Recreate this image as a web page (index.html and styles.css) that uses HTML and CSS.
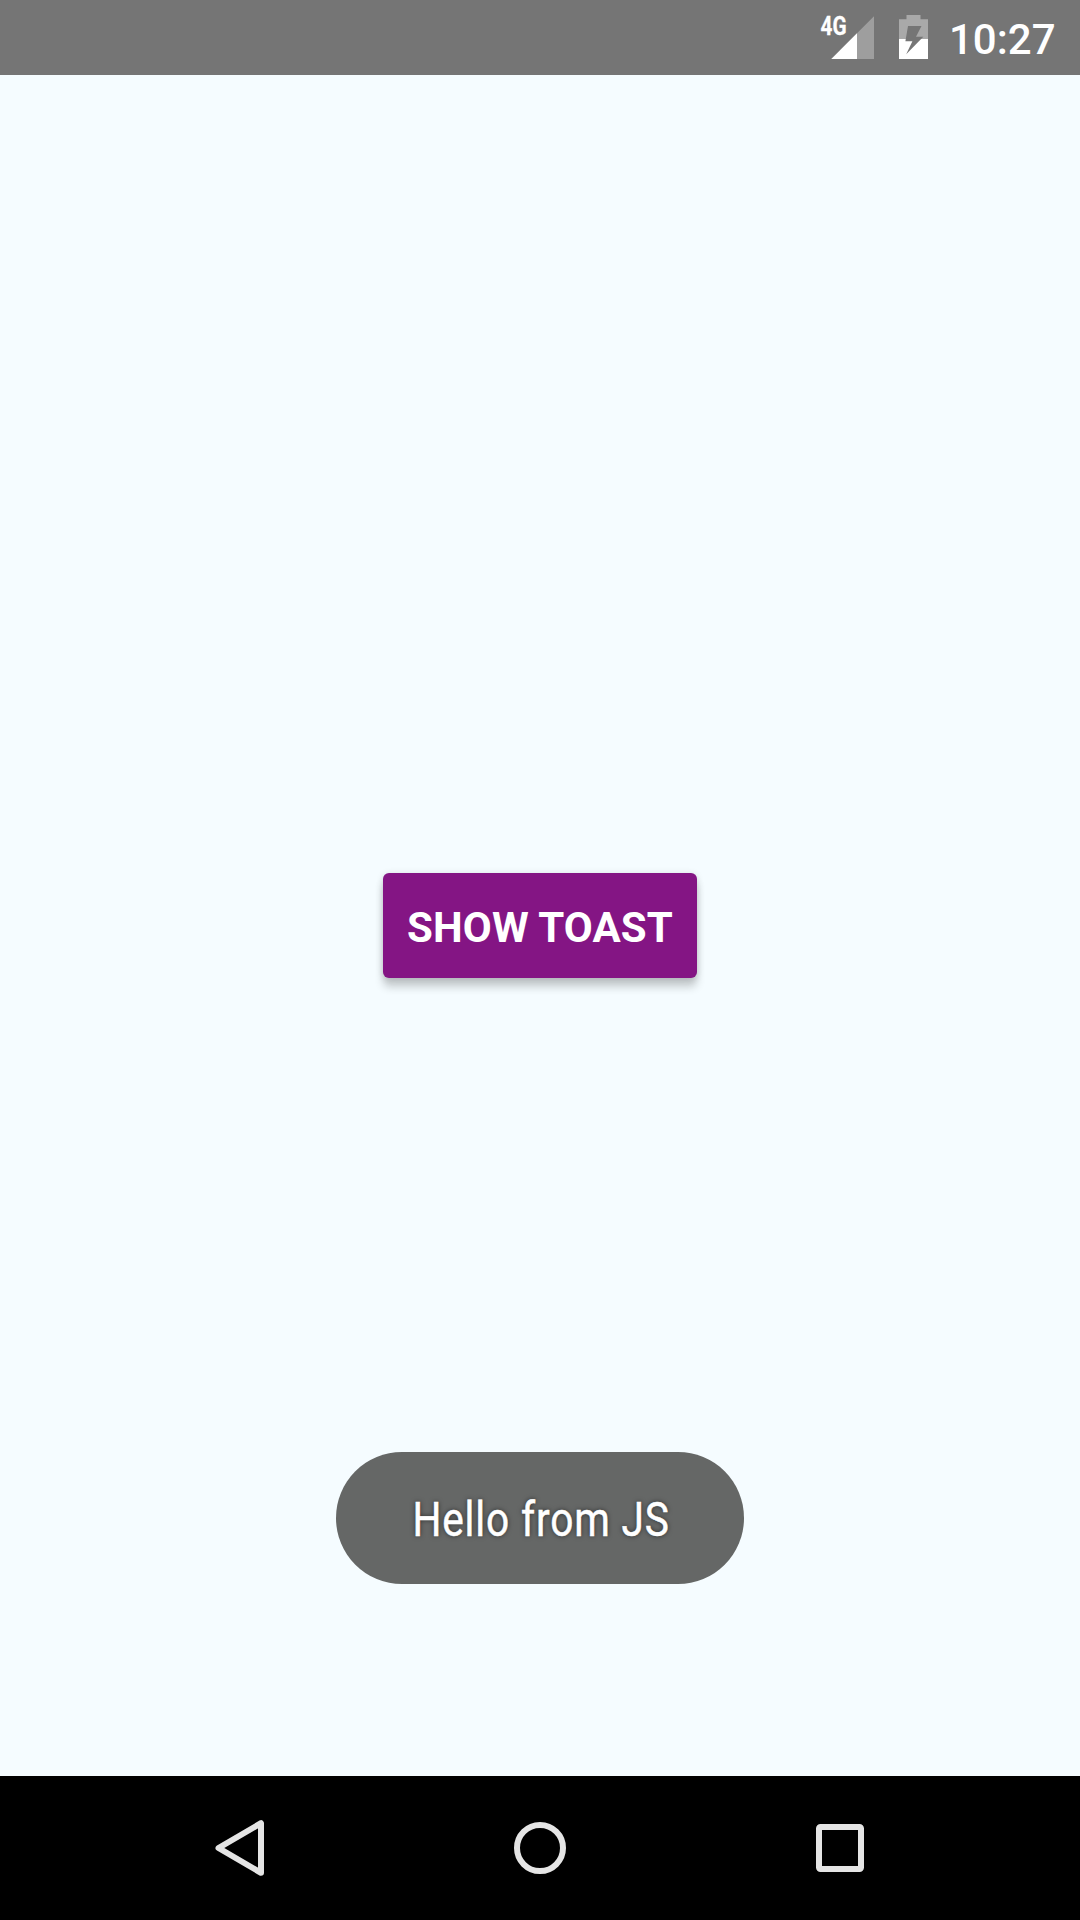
FILE: index.html
```html
<!DOCTYPE html>
<html lang="en">
<head>
<meta charset="utf-8">
<title>Show Toast</title>
<link rel="stylesheet" href="styles.css">
</head>
<body>
<div class="screen">
  <header class="status-bar">
    <svg class="signal" width="54" height="45" viewBox="0 0 54 45">
      <path d="M10.3 45 53 2.3V45Z" fill="#fff" fill-opacity=".3"/>
      <path d="M10.3 45 36 19.3V45Z" fill="#fff"/>
      <text class="network" x="-0.4" y="21.4" textLength="26" lengthAdjust="spacingAndGlyphs">4G</text>
    </svg>
    <svg class="battery" width="29" height="44" viewBox="0 0 29 44">
      <path fill="#fff" fill-opacity=".38" d="M7.5 0H21.5V4.3H29V24H0V4.3H7.5Z"/>
      <path fill="#fff" d="M0 24H29V44H0Z"/>
      <path fill="#757575" d="M9 11H22.5L17 21.8H24.3L7.2 39.3 13.4 26.3H6.4Z"/>
    </svg>
    <span class="clock">10:27</span>
  </header>
  <main class="content">
    <button class="toast-button">SHOW TOAST</button>
    <div class="toast"><span class="toast-text">Hello from JS</span></div>
  </main>
  <nav class="nav-bar">
    <svg width="60" height="60" viewBox="0 0 60 60"><path d="M51 5.2V54.8L8.5 30Z"/></svg>
    <svg width="60" height="60" viewBox="0 0 60 60"><circle cx="30" cy="30" r="23"/></svg>
    <svg width="60" height="60" viewBox="0 0 60 60"><rect x="9" y="9" width="42" height="42" rx="1.5"/></svg>
  </nav>
</div>
</body>
</html>
```
FILE: styles.css
```css
* { box-sizing: border-box; }
body { margin: 0; }
.screen {
  display: flex;
  flex-direction: column;
  width: 1080px;
  height: 1920px;
  background: #f5fcff;
  font-family: Roboto, sans-serif;
  color: #fff;
}
.status-bar {
  display: flex;
  align-items: flex-start;
  height: 75px;
  padding-left: 821px;
  background: #757575;
}
.signal { margin-top: 14px; overflow: visible; }
.network {
  fill: #fff;
  stroke: #fff;
  stroke-width: .3px;
  font-size: 25.5px;
  font-weight: 700;
}
.battery { margin: 15px 0 0 24px; }
.clock {
  margin: 15px 0 0 21px;
  font-size: 42px;
  font-weight: 500;
  line-height: 49px;
}
.content {
  position: relative;
  flex: 1;
  display: flex;
  justify-content: center;
  align-items: flex-start;
}
.toast-button {
  width: 314px;
  height: 105px;
  margin-top: 798px;
  padding: 4px 0 0;
  border: 0;
  border-radius: 6px;
  background: #841584;
  box-shadow: 0 9px 9px rgba(0, 0, 0, .19), 0 1px 7px rgba(0, 0, 0, .14);
  color: #fff;
  font: 700 42px/49px Roboto, sans-serif;
  letter-spacing: .12px;
  white-space: nowrap;
}
/* The toast floats over the app content. */
.toast {
  position: absolute;
  left: 336px;
  bottom: 192px;
  display: flex;
  justify-content: center;
  align-items: center;
  width: 408px;
  height: 132px;
  padding: 3px 0 0 2px;
  border-radius: 66px;
  background: #656766;
}
.toast-text {
  font-size: 48px;
  line-height: 56px;
  letter-spacing: 1px;
  white-space: nowrap;
  text-shadow: 0 0 6px rgba(0, 0, 0, .6);
  -webkit-text-stroke: .5px #fff;
  transform: scaleX(.846);
}
.nav-bar {
  display: flex;
  justify-content: space-between;
  align-items: center;
  height: 144px;
  padding: 0 210px;
  background: #000;
}
.nav-bar svg {
  overflow: visible;
  fill: none;
  stroke: #e5e5e5;
  stroke-width: 6px;
  stroke-linejoin: round;
}
```
